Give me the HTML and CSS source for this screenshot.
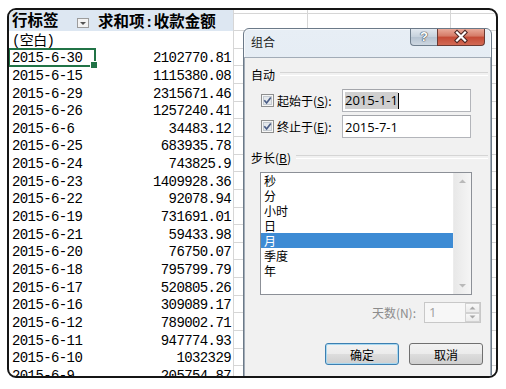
FILE: index.html
```html
<!DOCTYPE html>
<html lang="zh-CN">
<head>
    <meta charset="UTF-8">
    <title>组合</title>
    <link rel="stylesheet" href="styles.css">
</head>
<body>

<div class="frame">
    <div class="sheet">
        <div class="row strip">
            <div class="cell ca hd"></div><div class="cell cb hd"></div>
            <div class="cell cc"></div><div class="cell cd"></div><div class="cell ce"></div>
        </div>
        <div class="row head">
            <div class="cell ca hd"><span>行标签</span><span class="dd"></span></div>
            <div class="cell cb hd">求和项:收款金额</div>
            <div class="cell cc"></div><div class="cell cd"></div><div class="cell ce"></div>
        </div>
        <div class="row">
            <div class="cell ca">(空白)</div><div class="cell cb"></div>
            <div class="cell cc"></div><div class="cell cd"></div><div class="cell ce"></div>
        </div>
        <div class="row">
            <div class="cell ca sel">2015-6-30</div><div class="cell cb">2102770.81</div>
            <div class="cell cc"></div><div class="cell cd"></div><div class="cell ce"></div>
        </div>
        <div class="row">
            <div class="cell ca">2015-6-15</div><div class="cell cb">1115380.08</div>
            <div class="cell cc"></div><div class="cell cd"></div><div class="cell ce"></div>
        </div>
        <div class="row">
            <div class="cell ca">2015-6-29</div><div class="cell cb">2315671.46</div>
            <div class="cell cc"></div><div class="cell cd"></div><div class="cell ce"></div>
        </div>
        <div class="row">
            <div class="cell ca">2015-6-26</div><div class="cell cb">1257240.41</div>
            <div class="cell cc"></div><div class="cell cd"></div><div class="cell ce"></div>
        </div>
        <div class="row">
            <div class="cell ca">2015-6-6</div><div class="cell cb">34483.12</div>
            <div class="cell cc"></div><div class="cell cd"></div><div class="cell ce"></div>
        </div>
        <div class="row">
            <div class="cell ca">2015-6-25</div><div class="cell cb">683935.78</div>
            <div class="cell cc"></div><div class="cell cd"></div><div class="cell ce"></div>
        </div>
        <div class="row">
            <div class="cell ca">2015-6-24</div><div class="cell cb">743825.9</div>
            <div class="cell cc"></div><div class="cell cd"></div><div class="cell ce"></div>
        </div>
        <div class="row">
            <div class="cell ca">2015-6-23</div><div class="cell cb">1409928.36</div>
            <div class="cell cc"></div><div class="cell cd"></div><div class="cell ce"></div>
        </div>
        <div class="row">
            <div class="cell ca">2015-6-22</div><div class="cell cb">92078.94</div>
            <div class="cell cc"></div><div class="cell cd"></div><div class="cell ce"></div>
        </div>
        <div class="row">
            <div class="cell ca">2015-6-19</div><div class="cell cb">731691.01</div>
            <div class="cell cc"></div><div class="cell cd"></div><div class="cell ce"></div>
        </div>
        <div class="row">
            <div class="cell ca">2015-6-21</div><div class="cell cb">59433.98</div>
            <div class="cell cc"></div><div class="cell cd"></div><div class="cell ce"></div>
        </div>
        <div class="row">
            <div class="cell ca">2015-6-20</div><div class="cell cb">76750.07</div>
            <div class="cell cc"></div><div class="cell cd"></div><div class="cell ce"></div>
        </div>
        <div class="row">
            <div class="cell ca">2015-6-18</div><div class="cell cb">795799.79</div>
            <div class="cell cc"></div><div class="cell cd"></div><div class="cell ce"></div>
        </div>
        <div class="row">
            <div class="cell ca">2015-6-17</div><div class="cell cb">520805.26</div>
            <div class="cell cc"></div><div class="cell cd"></div><div class="cell ce"></div>
        </div>
        <div class="row">
            <div class="cell ca">2015-6-16</div><div class="cell cb">309089.17</div>
            <div class="cell cc"></div><div class="cell cd"></div><div class="cell ce"></div>
        </div>
        <div class="row">
            <div class="cell ca">2015-6-12</div><div class="cell cb">789002.71</div>
            <div class="cell cc"></div><div class="cell cd"></div><div class="cell ce"></div>
        </div>
        <div class="row">
            <div class="cell ca">2015-6-11</div><div class="cell cb">947774.93</div>
            <div class="cell cc"></div><div class="cell cd"></div><div class="cell ce"></div>
        </div>
        <div class="row">
            <div class="cell ca">2015-6-10</div><div class="cell cb">1032329</div>
            <div class="cell cc"></div><div class="cell cd"></div><div class="cell ce"></div>
        </div>
        <div class="row">
            <div class="cell ca">2015-6-9</div><div class="cell cb">205754.87</div>
            <div class="cell cc"></div><div class="cell cd"></div><div class="cell ce"></div>
        </div>
    </div>

    <div class="dialog">
        <div class="titlebar">
            <span class="title">组合</span>
            <div class="caps">
                <div class="help">?</div>
                <div class="close">
                    <svg width="46" height="16" viewBox="0 0 46 16">
                        <path d="M19 3.5 L27 11.5 M27 3.5 L19 11.5" stroke="#4a2420" stroke-width="4.2" stroke-linecap="square"/>
                        <path d="M19 3.5 L27 11.5 M27 3.5 L19 11.5" stroke="#ffffff" stroke-width="2.2" stroke-linecap="square"/>
                    </svg>
                </div>
            </div>
        </div>

        <div class="client">
            <div class="legend"><span>自动</span></div>

            <div class="field-row first">
                <svg class="check" width="13" height="13" viewBox="0 0 13 13">
                    <rect x="0.5" y="0.5" width="12" height="12" fill="#f6f6f6" stroke="#8e8f8f"/>
                    <rect x="2.5" y="2.5" width="8" height="8" fill="#e4e8ec" stroke="#c4cad0"/>
                    <path d="M3.3 6.3 L5.6 9 L9.8 3.4" fill="none" stroke="#4b5d86" stroke-width="1.7"/>
                </svg>
                <span class="flabel">起始于(<u>S</u>):</span>
                <div class="input"><span class="picked">2015-1-1</span><span class="caret"></span></div>
            </div>

            <div class="field-row">
                <svg class="check" width="13" height="13" viewBox="0 0 13 13">
                    <rect x="0.5" y="0.5" width="12" height="12" fill="#f6f6f6" stroke="#8e8f8f"/>
                    <rect x="2.5" y="2.5" width="8" height="8" fill="#e4e8ec" stroke="#c4cad0"/>
                    <path d="M3.3 6.3 L5.6 9 L9.8 3.4" fill="none" stroke="#4b5d86" stroke-width="1.7"/>
                </svg>
                <span class="flabel">终止于(<u>E</u>):</span>
                <div class="input">2015-7-1</div>
            </div>

            <div class="legend second"><span>步长(<u>B</u>)</span></div>

            <div class="listbox">
                <div class="items">
                    <div class="item">秒</div>
                    <div class="item">分</div>
                    <div class="item">小时</div>
                    <div class="item">日</div>
                    <div class="item on">月</div>
                    <div class="item">季度</div>
                    <div class="item">年</div>
                </div>
                <div class="scroll">
                    <svg width="17" height="17" viewBox="0 0 17 17"><path d="M5 10 L8.5 6.5 L12 10 Z" fill="#b9b9b9"/></svg>
                    <svg width="17" height="17" viewBox="0 0 17 17"><path d="M5 7 L8.5 10.5 L12 7 Z" fill="#b9b9b9"/></svg>
                </div>
            </div>

            <div class="spin-row">
                <span>天数(N):</span>
                <div class="spin">
                    <span class="spin-val">1</span>
                    <div class="spin-btns">
                        <div class="sb"><svg width="7" height="4" viewBox="0 0 7 4"><path d="M0.5 3.5 L3.5 0.5 L6.5 3.5 Z" fill="#a8a8a8"/></svg></div>
                        <div class="sb"><svg width="7" height="4" viewBox="0 0 7 4"><path d="M0.5 0.5 L3.5 3.5 L6.5 0.5 Z" fill="#a8a8a8"/></svg></div>
                    </div>
                </div>
            </div>

            <div class="btn-row">
                <button class="btn default">确定</button>
                <button class="btn">取消</button>
            </div>
        </div>
    </div>
</div>

</body>
</html>
```

FILE: styles.css
```css
* {
    box-sizing: border-box;
}

body {
    margin: 0;
    background: #fff;
    font-family: "Liberation Mono", "Noto Sans CJK SC", monospace;
}

.frame {
    position: relative;
    margin: 8px 0 0 7px;
    width: 491px;
    height: 370px;
    border: 2px solid #151515;
    border-radius: 9px;
    overflow: hidden;
    background: #fff;
}

/* sheet */

.sheet {
    display: flex;
    flex-direction: column;
}

.row {
    display: flex;
    flex: none;
    height: 17.65px;
    font-size: 14px;
    letter-spacing: -0.6px;
    line-height: 17.65px;
    color: #000;
    white-space: nowrap;
}

.row.strip {
    height: 3.5px;
}

.cell {
    flex: none;
    height: 100%;
    padding-top: 1.5px;
}

.ca {
    width: 86px;
    padding-left: 3px;
}

.cb {
    width: 138px;
    text-align: right;
    padding-right: 2px;
}

.cc {
    width: 74px;
}

.cd {
    width: 143px;
}

.ce {
    flex: 1;
}

.cc, .cd, .ce {
    padding-top: 0;
    border-left: 1px solid #d6d6d6;
    border-bottom: 1px solid #d6d6d6;
}

.hd {
    background: #dde7f2;
}

.head .hd {
    font-size: 15.5px;
    font-weight: bold;
    letter-spacing: 0;
}

.head .ca {
    display: flex;
    align-items: center;
    justify-content: space-between;
    padding-right: 6px;
}

.head .cb {
    text-align: left;
    padding-left: 3px;
}

.dd {
    display: flex;
    align-items: center;
    justify-content: center;
    width: 12px;
    height: 10px;
    border: 1px solid #9c9c9c;
    background: #f3f3f3;
}

.dd::after {
    content: "";
    border-left: 3px solid transparent;
    border-right: 3px solid transparent;
    border-top: 3px solid #555;
}

.sel {
    position: relative;
}

.sel::after {
    content: "";
    position: absolute;
    left: -1px;
    top: -1px;
    right: -1px;
    bottom: -1px;
    border: 2px solid #217346;
}

.sel::before {
    content: "";
    position: absolute;
    right: -3px;
    bottom: -3px;
    width: 6px;
    height: 6px;
    background: #217346;
    border: 1px solid #fff;
    z-index: 1;
}

/* dialog */

.dialog {
    position: absolute;
    left: 234px;
    top: 18px;
    width: 249px;
    height: 372px;
    border: 1px solid #6b7988;
    border-radius: 6px 6px 0 0;
    background: linear-gradient(#e7eef5, #d6e1ec);
    box-shadow: inset 0 0 0 1px rgba(255, 255, 255, 0.6);
    font-family: "Noto Sans CJK SC", sans-serif;
    font-size: 12px;
    color: #000;
}

.titlebar {
    display: flex;
    height: 28px;
    padding: 0 6px 0 7px;
}

.title {
    flex: 1;
    line-height: 26px;
    color: #1b1b1b;
}

.caps {
    display: flex;
    align-self: flex-start;
}

.help {
    width: 27px;
    height: 17px;
    border: 1px solid #6f7e8d;
    border-top: none;
    border-right: none;
    border-radius: 0 0 0 4px;
    background: linear-gradient(#e2e8ef, #c6d1dc 50%, #b5c3d1 50%, #cdd7e1);
    text-align: center;
    font-family: "Liberation Sans", sans-serif;
    font-weight: bold;
    font-size: 13px;
    line-height: 16px;
    color: #fff;
    text-shadow: 0 0 1px #3c4650, 0 0 1px #3c4650, 0 0 1px #3c4650;
}

.close {
    width: 48px;
    height: 17px;
    border: 1px solid #6b3a33;
    border-top: none;
    border-radius: 0 0 4px 0;
    background: linear-gradient(#e9a999, #d57a66 45%, #c44a35 50%, #d26a55);
}

.close svg {
    display: block;
}

.client {
    height: 340px;
    border: 1px solid #a2acb7;
    background: #f1f1f1;
}

.legend {
    display: flex;
    align-items: center;
    height: 16px;
    margin-top: 8px;
    padding: 0 2px 0 6px;
}

.legend::after {
    content: "";
    flex: 1;
    height: 2px;
    margin-left: 5px;
    border-top: 1px solid #d5d5d5;
    border-bottom: 1px solid #fff;
}

.legend.second {
    margin-top: 11px;
}

.field-row {
    display: flex;
    align-items: center;
    height: 23px;
    margin-top: 3px;
    padding-left: 16px;
}

.field-row.first {
    margin-top: 7px;
}

.check {
    flex: none;
}

.flabel {
    width: 65px;
    margin-left: 3px;
}

.input {
    display: flex;
    align-items: center;
    width: 129px;
    height: 23px;
    padding-left: 2px;
    border: 1px solid #b3b5ba;
    border-top-color: #a4a6ab;
    background: #fff;
    font-family: "Open Sans", sans-serif;
    font-size: 13px;
}

.picked {
    background: #cfcfcf;
    line-height: 17px;
}

.caret {
    width: 1px;
    height: 16px;
    background: #000;
}

.listbox {
    display: flex;
    width: 212px;
    height: 123px;
    margin: 7px 0 0 15px;
    border: 1px solid #8c9097;
    background: #fff;
}

.items {
    flex: 1;
}

.item {
    height: 15px;
    line-height: 15px;
    padding-left: 3px;
    overflow: hidden;
}

.item.on {
    background: #3d8bd4;
    color: #fff;
}

.scroll {
    display: flex;
    flex-direction: column;
    justify-content: space-between;
    width: 18px;
    background: linear-gradient(to right, #e8e8e8, #f5f5f5);
    border-left: 1px solid #ececec;
}

.scroll svg {
    display: block;
}

.spin-row {
    display: flex;
    align-items: center;
    justify-content: flex-end;
    gap: 8px;
    height: 21px;
    margin-top: 7px;
    padding-right: 9px;
    color: #8c8c8c;
}

.spin {
    display: flex;
    width: 57px;
    height: 21px;
    border: 1px solid #c8c8c8;
    background: #f7f7f7;
}

.spin-val {
    flex: 1;
    padding-left: 4px;
    line-height: 19px;
    font-family: "Open Sans", sans-serif;
    font-size: 13px;
    color: #a0a0a0;
}

.spin-btns {
    display: flex;
    flex-direction: column;
    width: 15px;
}

.sb {
    flex: 1;
    display: flex;
    align-items: center;
    justify-content: center;
    border: 1px solid #d2d2d2;
    background: linear-gradient(#f8f8f8, #ebebeb);
}

.btn-row {
    display: flex;
    justify-content: flex-end;
    gap: 10px;
    margin-top: 20px;
    padding-right: 7px;
}

.btn {
    width: 74px;
    height: 22px;
    padding: 0;
    border: 1px solid #707070;
    border-radius: 3px;
    background: linear-gradient(#f2f2f2, #ebebeb 50%, #dddddd 50%, #cfcfcf);
    font-family: "Noto Sans CJK SC", sans-serif;
    font-size: 12px;
    color: #000;
}

.btn.default {
    border-color: #3c7fb1;
    box-shadow: inset 0 0 0 1px #a8d8f0;
}
```
